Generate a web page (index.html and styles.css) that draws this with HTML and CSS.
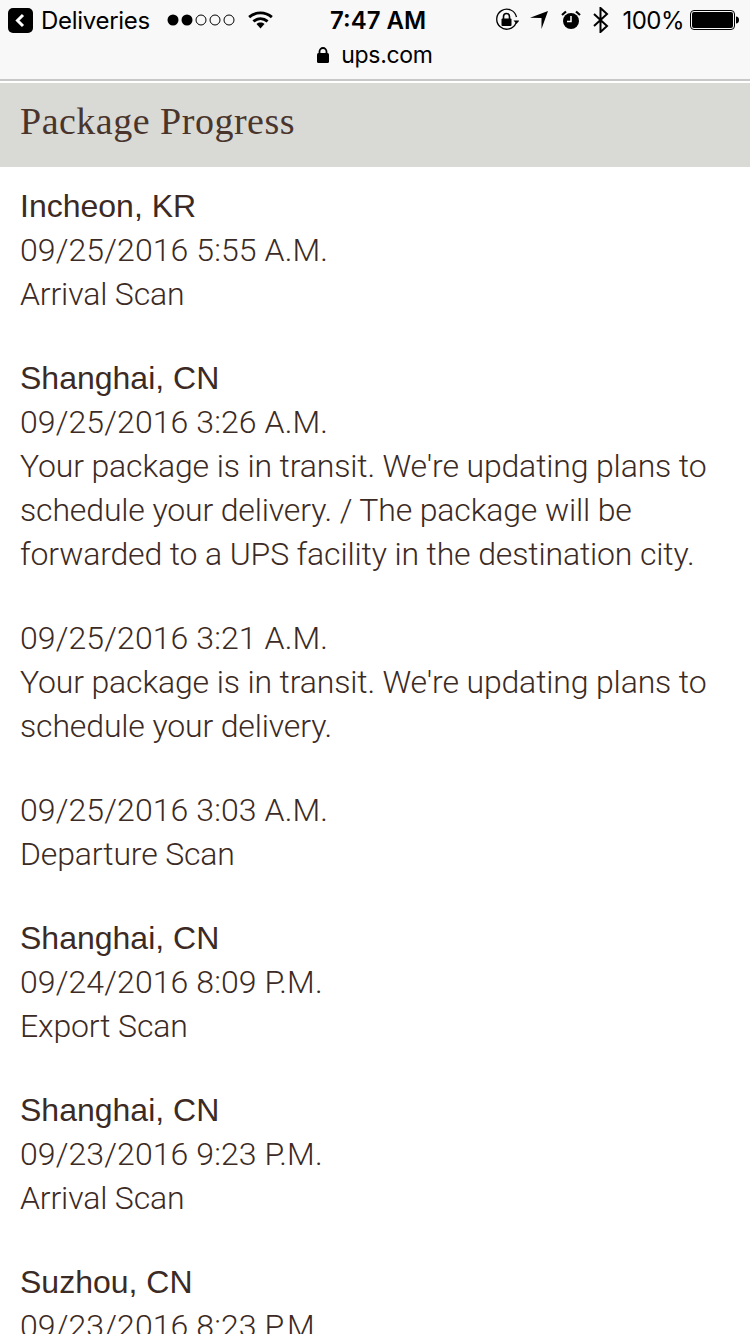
FILE: index.html
```html
<!DOCTYPE html>
<html lang="en">
<head>
    <meta charset="UTF-8">
    <meta name="viewport" content="width=device-width, initial-scale=1.0">
    <title>Package Progress</title>
    <link rel="stylesheet" href="styles.css">
</head>
<body>
    <div class="browser-bar">
        <div class="status">
            <div class="status-left">
                <svg class="back" width="25" height="25" viewBox="0 0 25 25"><rect width="25" height="25" rx="5" fill="#000"/><path d="M15 7l-5.500 5.500L15 18" fill="none" stroke="#fff" stroke-width="3"/></svg>
                <span class="carrier">Deliveries</span>
                <svg class="signal" width="68" height="12" viewBox="0 0 68 12">
                    <circle cx="6" cy="6" r="5.500"/><circle cx="20" cy="6" r="5.500"/>
                    <circle class="off" cx="34" cy="6" r="5"/><circle class="off" cx="48" cy="6" r="5"/><circle class="off" cx="62" cy="6" r="5"/>
                </svg>
                <svg class="wifi" width="25" height="18" viewBox="0 0 26 19"><path d="M1 6.500C8 .5 18 .5 25 6.500M5.500 11C10 7.200 16 7.200 20.500 11" fill="none" stroke="#000" stroke-width="3"/><path d="M8.800 13.700C11.300 11.700 14.700 11.700 17.200 13.700L13 18.500z"/></svg>
            </div>
            <div class="time">7:47 AM</div>
            <div class="status-right">
                <svg class="rotation" width="24" height="24" viewBox="0 0 24 24"><path d="M21 15A10 10 0 1 1 21.500 9" fill="none" stroke="#000" stroke-width="1.300"/><path d="M18.500 12.500h6l-3 3.500z"/><rect x="6.500" y="10.500" width="10" height="7.500" rx="1"/><path d="M8.500 11V8.500a3 3 0 0 1 6 0V11" fill="none" stroke="#000" stroke-width="1.600"/></svg>
                <svg class="location" width="18" height="18" viewBox="0 0 18 18"><path d="M18 0L11.500 18V7L0 6.800z"/></svg>
                <svg class="alarm" width="20" height="20" viewBox="0 0 20 20"><circle cx="10" cy="11" r="8"/><path d="M10 6v5.500H6" fill="none" stroke="#fff" stroke-width="1.500"/><path d="M1 5l4-3.500M19 5l-4-3.500" stroke="#000" stroke-width="2.200"/></svg>
                <svg class="bluetooth" width="17" height="26" viewBox="0 0 17 26"><path d="M2 7l13 12-6.500 6V1L15 7 2 19" fill="none" stroke="#000" stroke-width="2"/></svg>
                <span class="percent">100%</span>
                <svg class="battery" width="49" height="20" viewBox="0 0 49 20"><rect x=".5" y=".5" width="44" height="19" rx="3.500" fill="none" stroke="#000"/><rect x="2" y="2" width="41" height="16" rx="2"/><path d="M46 6.500c2 0 3 1.500 3 3.500s-1 3.500-3 3.500z"/></svg>
            </div>
        </div>
        <div class="url">
            <svg class="lock" width="12" height="16" viewBox="0 0 12 16"><rect y="6" width="12" height="10" rx="1.500"/><path d="M2.500 7V4.500a3.500 3.500 0 0 1 7 0V7" fill="none" stroke="#000" stroke-width="1.800"/></svg>
            <span>ups.com</span>
        </div>
    </div>

    <h1 class="section-title">Package Progress</h1>

    <div class="progress">
        <div class="group">
            <div class="place">Incheon, KR</div>
            <div class="date">09/25/2016 5:55 A.M.</div>
            <div>Arrival Scan</div>
        </div>
        <div class="group">
            <div class="place">Shanghai, CN</div>
            <div class="date">09/25/2016 3:26 A.M.</div>
            <div>Your package is in transit. We're updating plans to schedule your delivery. / The package will be forwarded to a UPS facility in the destination city.</div>
        </div>
        <div class="group">
            <div class="date">09/25/2016 3:21 A.M.</div>
            <div>Your package is in transit. We're updating plans to schedule your delivery.</div>
        </div>
        <div class="group">
            <div class="date">09/25/2016 3:03 A.M.</div>
            <div>Departure Scan</div>
        </div>
        <div class="group">
            <div class="place">Shanghai, CN</div>
            <div class="date">09/24/2016 8:09 P.M.</div>
            <div>Export Scan</div>
        </div>
        <div class="group">
            <div class="place">Shanghai, CN</div>
            <div class="date">09/23/2016 9:23 P.M.</div>
            <div>Arrival Scan</div>
        </div>
        <div class="group">
            <div class="place">Suzhou, CN</div>
            <div class="date">09/23/2016 8:23 P.M.</div>
        </div>
    </div>
</body>
</html>
```
FILE: styles.css
```css
html, body {
    height: 1334px;
    overflow: hidden;
}
body {
    font-family: 'Roboto', 'Liberation Sans', sans-serif;
    background-color: #fff;
    color: #3c2a24;
    margin: 0;
    padding: 0;
}
.browser-bar {
    height: 79px;
    background-color: #f8f8f8;
    border-bottom: 2px solid #c8c8c8;
    color: #000;
    font-family: 'Inter', sans-serif;
}
.status {
    display: grid;
    grid-template-columns: 322px auto 1fr;
    height: 40px;
    padding: 0 11px 0 8px;
    align-items: center;
}
.status-left, .status-right {
    display: flex;
    align-items: center;
}
.status-right {
    justify-content: flex-end;
}
.carrier {
    font-size: 24px;
    letter-spacing: -0.3px;
    margin-left: 8px;
}
.signal {
    margin-left: 17px;
}
.signal .off {
    fill: none;
    stroke: #000;
    stroke-width: 1;
}
.wifi {
    margin-left: 13px;
}
.time {
    font-size: 24px;
    font-weight: 600;
}
.location {
    margin-left: 11px;
}
.alarm {
    margin-left: 13px;
}
.bluetooth {
    margin-left: 11px;
}
.percent {
    font-size: 24px;
    letter-spacing: -0.5px;
    margin-left: 13px;
}
.battery {
    margin-left: 6px;
}
.url {
    display: flex;
    justify-content: center;
    align-items: center;
    gap: 12px;
    font-size: 23px;
    letter-spacing: -0.3px;
    height: 30px;
}
.section-title {
    margin: 2px 0 0;
    height: 84px;
    line-height: 76px;
    padding-left: 20px;
    background-color: #d9dad5;
    font-family: 'Liberation Serif', serif;
    font-size: 38px;
    letter-spacing: 0.5px;
    font-weight: normal;
    color: #4a352d;
}
.progress {
    padding: 17px 20px 0;
    font-size: 32px;
    font-weight: 300;
    letter-spacing: -0.15px;
    line-height: 44px;
}
.group {
    margin-bottom: 40px;
}
.place {
    font-family: 'Liberation Sans', sans-serif;
    font-weight: 400;
    letter-spacing: 0;
}
.date {
    letter-spacing: 0.1px;
}
```
